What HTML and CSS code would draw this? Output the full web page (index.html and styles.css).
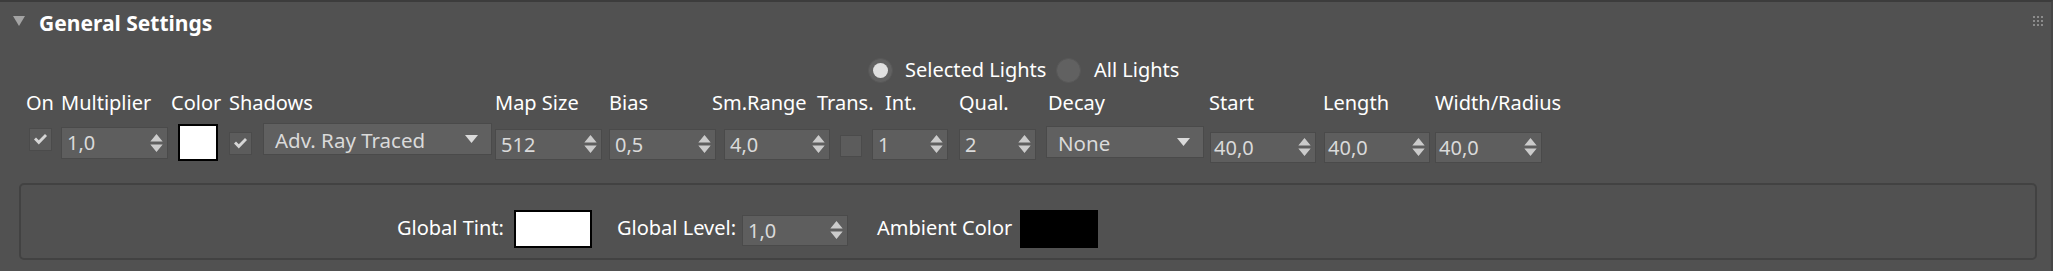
FILE: index.html
```html
<!DOCTYPE html>
<html>
<head>
<meta charset="utf-8">
<link rel="stylesheet" href="styles.css">
</head>
<body>
<div class="panel">
  <div class="header">
    <span class="tri"></span>
    <span class="title">General Settings</span>
    <span class="grip">
      <i></i><i></i><i></i><i></i><i></i><i></i><i></i><i></i><i></i>
    </span>
  </div>
  <div class="radios">
    <span class="radio on"><span class="dot"></span></span>
    <span class="rlabel r1">Selected Lights</span>
    <span class="radio"></span>
    <span class="rlabel r2">All Lights</span>
  </div>
  <div class="labels">
    <span class="l-on">On</span>
    <span class="l-mult">Multiplier</span>
    <span class="l-color">Color</span>
    <span class="l-shadows">Shadows</span>
    <span class="l-map">Map Size</span>
    <span class="l-bias">Bias</span>
    <span class="l-sm">Sm.Range</span>
    <span class="l-trans">Trans.</span>
    <span class="l-int">Int.</span>
    <span class="l-qual">Qual.</span>
    <span class="l-decay">Decay</span>
    <span class="l-start">Start</span>
    <span class="l-len">Length</span>
    <span class="l-width">Width/Radius</span>
  </div>
  <div class="controls">
    <span class="check c-on"><svg viewBox="0 0 13 11" class="tick"><path d="M0 5.5 L2 3.5 L4.8 6.3 L11 0 L13 2 L4.8 10.5 Z"/></svg></span>
    <span class="spin c-mult"><span class="val">1,0</span><svg class="arrows" viewBox="0 0 13 20"><path d="M6.5 0 L13 8 L0 8Z M0 11 L13 11 L6.5 19Z"/></svg></span>
    <span class="swatch white c-color"></span>
    <span class="check c-shcheck"><svg viewBox="0 0 13 11" class="tick"><path d="M0 5.5 L2 3.5 L4.8 6.3 L11 0 L13 2 L4.8 10.5 Z"/></svg></span>
    <span class="drop c-shadows"><span class="val">Adv. Ray Traced</span><svg class="darrow" viewBox="0 0 13 8"><path d="M0 0 L13 0 L6.5 8Z"/></svg></span>
    <span class="spin c-map"><span class="val">512</span><svg class="arrows" viewBox="0 0 13 20"><path d="M6.5 0 L13 8 L0 8Z M0 11 L13 11 L6.5 19Z"/></svg></span>
    <span class="spin c-bias"><span class="val">0,5</span><svg class="arrows" viewBox="0 0 13 20"><path d="M6.5 0 L13 8 L0 8Z M0 11 L13 11 L6.5 19Z"/></svg></span>
    <span class="spin c-sm"><span class="val">4,0</span><svg class="arrows" viewBox="0 0 13 20"><path d="M6.5 0 L13 8 L0 8Z M0 11 L13 11 L6.5 19Z"/></svg></span>
    <span class="check c-trans"></span>
    <span class="spin c-int"><span class="val">1</span><svg class="arrows" viewBox="0 0 13 20"><path d="M6.5 0 L13 8 L0 8Z M0 11 L13 11 L6.5 19Z"/></svg></span>
    <span class="spin c-qual"><span class="val">2</span><svg class="arrows" viewBox="0 0 13 20"><path d="M6.5 0 L13 8 L0 8Z M0 11 L13 11 L6.5 19Z"/></svg></span>
    <span class="drop c-decay"><span class="val">None</span><svg class="darrow" viewBox="0 0 13 8"><path d="M0 0 L13 0 L6.5 8Z"/></svg></span>
    <span class="spin c-start"><span class="val">40,0</span><svg class="arrows" viewBox="0 0 13 20"><path d="M6.5 0 L13 8 L0 8Z M0 11 L13 11 L6.5 19Z"/></svg></span>
    <span class="spin c-len"><span class="val">40,0</span><svg class="arrows" viewBox="0 0 13 20"><path d="M6.5 0 L13 8 L0 8Z M0 11 L13 11 L6.5 19Z"/></svg></span>
    <span class="spin c-width"><span class="val">40,0</span><svg class="arrows" viewBox="0 0 13 20"><path d="M6.5 0 L13 8 L0 8Z M0 11 L13 11 L6.5 19Z"/></svg></span>
  </div>
  <div class="group">
    <span class="glabel g-tint">Global Tint:</span>
    <span class="swatch white big"></span>
    <span class="glabel g-level">Global Level:</span>
    <span class="spin g-spin"><span class="val">1,0</span><svg class="arrows" viewBox="0 0 13 20"><path d="M6.5 0 L13 8 L0 8Z M0 11 L13 11 L6.5 19Z"/></svg></span>
    <span class="glabel g-amb">Ambient Color</span>
    <span class="swatch black big"></span>
  </div>
</div>
</body>
</html>
```
FILE: styles.css
```css
html, body {
  margin: 0;
  padding: 0;
  background: #515151;
}
body {
  width: 2053px;
  height: 271px;
  overflow: hidden;
  font-family: "Noto Sans", "Open Sans", sans-serif;
  font-size: 20px;
  color: #ffffff;
}
.panel {
  height: 271px;
  border-top: 2px solid #3c3c3c;
  border-right: 2px solid #464646;
  box-sizing: border-box;
  position: relative;
}
.header {
  display: flex;
  align-items: flex-start;
  height: 44px;
  box-sizing: border-box;
  padding-left: 13px;
  padding-top: 8px;
}
.tri {
  flex: none;
  width: 0;
  height: 0;
  border-left: 6.5px solid transparent;
  border-right: 6.5px solid transparent;
  border-top: 10px solid #a3a3a3;
  margin-top: 6px;
}
.title {
  margin-left: 14px;
  font-weight: bold;
  font-size: 21px;
  line-height: 21px;
  margin-top: 3px;
  white-space: nowrap;
}
.grip {
  position: absolute;
  right: 8px;
  top: 14px;
  display: grid;
  grid-template-columns: repeat(3, 2px);
  grid-auto-rows: 2px;
  gap: 2px;
}
.grip i {
  background: #8c8c8c;
  width: 2px;
  height: 2px;
}
.radios {
  display: flex;
  align-items: center;
  height: 24px;
  margin-top: 12px;
  padding-left: 868px;
  line-height: 20px;
}
.radio {
  flex: none;
  width: 25px;
  height: 25px;
  box-sizing: border-box;
  border-radius: 50%;
  background: #616161;
  border: 1px solid #575757;
  display: flex;
  align-items: center;
  justify-content: center;
}
.radio .dot {
  width: 15px;
  height: 15px;
  border-radius: 50%;
  background: #e0e0e0;
}
.rlabel { white-space: nowrap; }
.r1 { margin-left: 12px; width: 151px; }
.r2 { margin-left: 13px; }

.labels {
  display: flex;
  margin-top: 8px;
  height: 26px;
  line-height: 26px;
  white-space: nowrap;
  padding-left: 26px;
}
.labels span { display: block; flex: none; }
.l-on { width: 35px; }
.l-mult { width: 110px; }
.l-color { width: 58px; }
.l-shadows { width: 266px; }
.l-map { width: 114px; }
.l-bias { width: 103px; }
.l-sm { width: 105px; }
.l-trans { width: 68px; }
.l-int { width: 74px; }
.l-qual { width: 89px; }
.l-decay { width: 161px; }
.l-start { width: 114px; }
.l-len { width: 112px; }

.controls {
  display: flex;
  align-items: flex-start;
  height: 40px;
  margin-top: 7px;
}
.controls > span { flex: none; }
.check {
  width: 23px;
  height: 23px;
  box-sizing: border-box;
  background: #5c5c5c;
  border: 1px solid #4b4b4b;
  display: flex;
  align-items: center;
  justify-content: center;
}
.tick {
  width: 13px;
  height: 11px;
  fill: #d6d6d6;
}
.spin, .drop {
  display: flex;
  align-items: center;
  box-sizing: border-box;
  background: #5e5e5e;
  border: 1px solid #4a4a4a;
  height: 31px;
  color: #dadada;
  line-height: 20px;
}
.spin .val, .drop .val {
  flex: 1;
  padding-left: 5px;
  white-space: nowrap;
}
.arrows {
  flex: none;
  width: 13px;
  height: 19px;
  fill: #cbcbcb;
  margin-right: 4px;
}
.drop { height: 32px; background: #606060; }
.drop .val { padding-left: 11px; padding-top: 2px; font-size: 20.5px; }
.darrow {
  flex: none;
  width: 13px;
  height: 8px;
  fill: #dadada;
  margin-right: 13px;
}
.swatch {
  box-sizing: border-box;
  border: 2px solid #000;
}
.white { background: #ffffff; }
.black { background: #000000; }

.c-on { margin-left: 29px; margin-top: 5px; }
.c-mult { margin-left: 9px; width: 107px; margin-top: 4px; height: 32px; }
.c-color { margin-left: 10px; width: 40px; height: 37px; margin-top: 1px; }
.c-shcheck { margin-left: 11px; margin-top: 9px; }
.c-shadows { margin-left: 11px; width: 229px; margin-top: 0px; }
.c-map { margin-left: 3px; width: 107px; margin-top: 6px; }
.c-bias { margin-left: 7px; width: 107px; margin-top: 6px; }
.c-sm { margin-left: 8px; width: 106px; margin-top: 6px; }
.c-trans { margin-left: 10px; margin-top: 12px; width: 22px; height: 22px; }
.c-int { margin-left: 10px; width: 76px; margin-top: 6px; }
.c-qual { margin-left: 11px; width: 77px; margin-top: 6px; }
.c-decay { margin-left: 10px; width: 158px; margin-top: 3px; }
.c-start { margin-left: 6px; width: 106px; margin-top: 9px; }
.c-start .val, .c-len .val, .c-width .val { padding-left: 3px; }
.c-len { margin-left: 8px; width: 106px; margin-top: 9px; }
.c-width { margin-left: 5px; width: 107px; margin-top: 9px; }

.group {
  margin-top: 20px;
  margin-left: 19px;
  width: 2018px;
  height: 77px;
  box-sizing: border-box;
  border: 2px solid #424242;
  border-radius: 5px;
  display: flex;
  align-items: flex-start;
  line-height: 20px;
  padding-left: 376px;
}
.group > span { flex: none; }
.glabel { white-space: nowrap; margin-top: 33px; }
.g-tint { width: 117px; }
.big { width: 78px; height: 38px; margin-top: 25px; }
.g-level { margin-left: 25px; width: 125px; }
.g-spin { width: 106px; height: 31px; margin-top: 30px; }
.g-amb { margin-left: 29px; width: 143px; }
.swatch.black { border: none; }
```
